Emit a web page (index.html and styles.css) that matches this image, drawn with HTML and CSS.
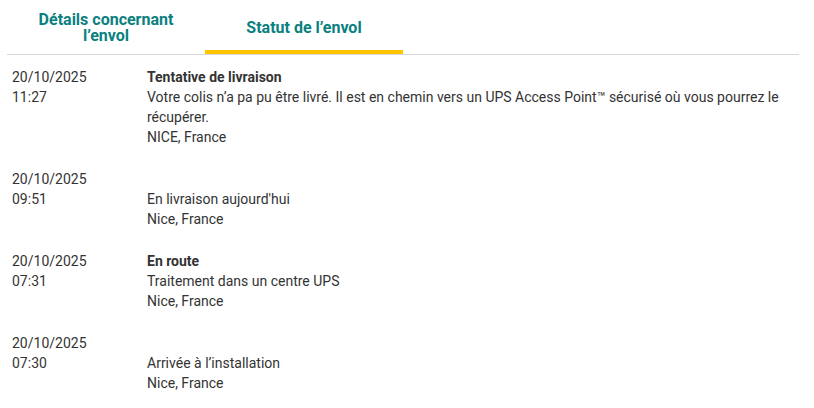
FILE: index.html
```html
<!DOCTYPE html>
<html lang="fr">
<head>
<meta charset="utf-8">
<title>Statut de l'envoi</title>
<link rel="stylesheet" href="styles.css">
</head>
<body>
<div class="page">
  <div class="tabs">
    <div class="tab"><span class="tab-label">Détails concernant<br>l’envol</span></div>
    <div class="tab active"><span class="tab-label">Statut de l’envol</span></div>
  </div>
  <div class="events">
    <div class="event">
      <div class="when"><div>20/10/2025</div><div>11:27</div></div>
      <div class="what">
        <div class="title">Tentative de livraison</div>
        <div>Votre colis n’a pa pu être livré. Il est en chemin vers un UPS Access Point™ sécurisé où vous pourrez le récupérer.</div>
        <div>NICE, France</div>
      </div>
    </div>
    <div class="event">
      <div class="when"><div>20/10/2025</div><div>09:51</div></div>
      <div class="what">
        <div class="title">&nbsp;</div>
        <div>En livraison aujourd'hui</div>
        <div>Nice, France</div>
      </div>
    </div>
    <div class="event">
      <div class="when"><div>20/10/2025</div><div>07:31</div></div>
      <div class="what">
        <div class="title">En route</div>
        <div>Traitement dans un centre UPS</div>
        <div>Nice, France</div>
      </div>
    </div>
    <div class="event">
      <div class="when"><div>20/10/2025</div><div>07:30</div></div>
      <div class="what">
        <div class="title">&nbsp;</div>
        <div>Arrivée à l’installation</div>
        <div>Nice, France</div>
      </div>
    </div>
  </div>
</div>
</body>
</html>
```
FILE: styles.css
```css
html, body {
  margin: 0;
  padding: 0;
  background: #fff;
}
body {
  font-family: Roboto, "Liberation Sans", sans-serif;
  color: #333;
  font-size: 14px;
  line-height: 20px;
}
.page {
  padding: 0 15px 0 7px;
}
.tabs {
  display: flex;
  border-bottom: 1px solid #d8d8d8;
  height: 55px;
  box-sizing: border-box;
}
.tab {
  width: 198px;
  display: flex;
  align-items: center;
  justify-content: center;
  text-align: center;
  font-weight: 700;
  font-size: 16px;
  line-height: 16px;
  color: #0a8080;
  padding-top: 5px;
  box-sizing: border-box;
  border-bottom: 4px solid transparent;
}
.tab.active {
  border-bottom-color: #ffc400;
}
.events {
  padding: 12px 0 0 5px;
  display: flex;
  flex-direction: column;
  gap: 22px;
}
.event {
  display: flex;
}
.when {
  width: 135px;
  flex: none;
}
.what {
  flex: 1;
  padding-right: 10px;
}
.title {
  font-weight: 700;
}
```
